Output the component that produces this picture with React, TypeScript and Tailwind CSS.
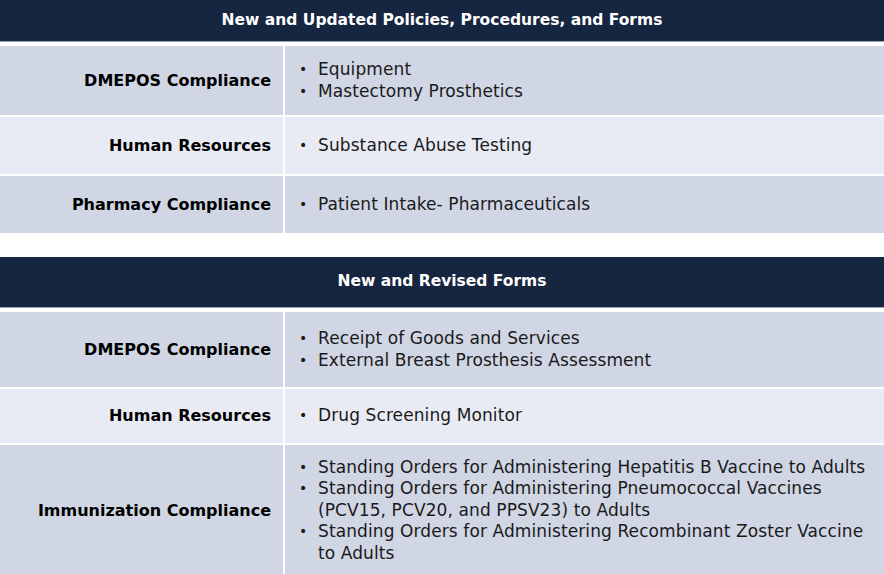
const sections = [
  {
    title: "New and Updated Policies, Procedures, and Forms",
    headerHeight: "h-[42px]",
    rows: [
      { label: "DMEPOS Compliance", items: ["Equipment", "Mastectomy Prosthetics"], height: "h-[69px]", tone: "dark" },
      { label: "Human Resources", items: ["Substance Abuse Testing"], height: "h-[57px]", tone: "light" },
      { label: "Pharmacy Compliance", items: ["Patient Intake- Pharmaceuticals"], height: "h-[57px]", tone: "dark" },
    ],
  },
  {
    title: "New and Revised Forms",
    headerHeight: "h-[51px]",
    rows: [
      { label: "DMEPOS Compliance", items: ["Receipt of Goods and Services", "External Breast Prosthesis Assessment"], height: "h-[75px]", tone: "dark" },
      { label: "Human Resources", items: ["Drug Screening Monitor"], height: "h-[54px]", tone: "light" },
      {
        label: "Immunization Compliance",
        items: [
          "Standing Orders for Administering Hepatitis B Vaccine to Adults",
          "Standing Orders for Administering Pneumococcal Vaccines (PCV15, PCV20, and PPSV23) to Adults",
          "Standing Orders for Administering Recombinant Zoster Vaccine to Adults",
        ],
        height: "h-[131px]",
        tone: "dark",
      },
    ],
  },
];

export default function App() {
  return (
    <div className="w-[884px] h-[574px] overflow-hidden bg-white font-['DejaVu_Sans',sans-serif] text-black">
      {sections.map((section, s) => (
        <div key={section.title} className={s === 1 ? "mt-[24px]" : ""}>
          {/* header band */}
          <div
            className={`${section.headerHeight} flex items-center justify-center bg-[#172640] border-b border-[#9aa3b2] text-white text-[15.5px] font-bold`}
          >
            {section.title}
          </div>
          <div className="grid grid-cols-[283px_1fr] gap-[2px] pt-[4px] bg-white">
            {section.rows.map((row) => {
              const bg = row.tone === "dark" ? "bg-[#d0d6e4]" : "bg-[#e9ebf4]";
              return (
                <div key={row.label + row.items[0]} className="contents">
                  <div
                    className={`${row.height} ${bg} flex items-center justify-end pr-[12px] text-[16px] font-bold`}
                  >
                    {row.label}
                  </div>
                  <div className={`${row.height} ${bg} flex items-center pl-[14px] pr-[10px]`}>
                    <ul className="text-[17px] leading-[21.5px] text-[#1a1a1a] tracking-[0.1px]">
                      {row.items.map((item) => (
                        <li key={item} className="flex">
                          <span className="w-[19px] shrink-0 text-[14px]">•</span>
                          <span>{item}</span>
                        </li>
                      ))}
                    </ul>
                  </div>
                </div>
              );
            })}
          </div>
        </div>
      ))}
    </div>
  );
}
